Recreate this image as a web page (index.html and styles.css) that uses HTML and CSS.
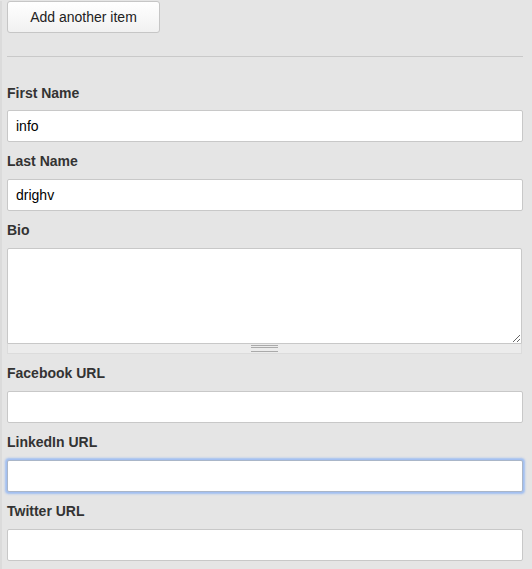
FILE: index.html
```html
<!DOCTYPE html>
<html>
<head>
<meta charset="utf-8">
<link rel="stylesheet" href="styles.css">
</head>
<body>
<div class="page">
  <button class="btn" type="button">Add another item</button>
  <div class="rule"></div>
  <form class="form">
    <div class="field first">
      <label class="label">First Name</label>
      <input class="input" type="text" value="info">
    </div>
    <div class="field">
      <label class="label">Last Name</label>
      <input class="input" type="text" value="drighv">
    </div>
    <div class="field">
      <label class="label">Bio</label>
      <div class="textarea-wrap">
        <textarea class="textarea"></textarea>
        <div class="grippie"><span></span></div>
      </div>
    </div>
    <div class="field after-bio">
      <label class="label">Facebook URL</label>
      <input class="input" type="text">
    </div>
    <div class="field">
      <label class="label">LinkedIn URL</label>
      <input class="input focus" type="text">
    </div>
    <div class="field">
      <label class="label">Twitter URL</label>
      <input class="input" type="text">
    </div>
  </form>
</div>
</body>
</html>
```

FILE: styles.css
```css
html, body {
  margin: 0;
  padding: 0;
  background: #e5e5e5;
  height: 100%;
  overflow: hidden;
}
body {
  font-family: "Liberation Sans", Arial, sans-serif;
  color: #333;
}
.page {
  border-left: 2px solid #dbdbdb;
  padding-left: 5px;
  width: 516px;
  min-height: 100%;
  box-sizing: content-box;
}
.btn {
  display: block;
  margin: 1px 0 0 0;
  width: 153px;
  height: 32px;
  border: 1px solid #c6c6c6;
  border-radius: 3px;
  background: linear-gradient(#ffffff, #f1f1f1);
  font-family: "Liberation Sans", Arial, sans-serif;
  font-size: 14px;
  color: #222;
  padding: 0;
}
.rule {
  height: 1px;
  background: #c9c9c9;
  margin-top: 23px;
  width: 516px;
}
.form {
  margin: 0;
}
.field {
  display: flex;
  flex-direction: column;
}
.label {
  display: block;
  font-size: 14px;
  font-weight: bold;
  line-height: 16px;
  color: #333;
  margin-top: 11px;
  margin-bottom: 10px;
}
.field.first .label {
  margin-top: 28px;
  margin-bottom: 9px;
}
.field.after-bio .label {
  margin-top: 11px;
}
.input {
  display: block;
  box-sizing: border-box;
  width: 516px;
  height: 32px;
  margin: 0;
  border: 1px solid #c8c8c8;
  border-radius: 2px;
  background: #fff;
  padding: 0 8px;
  font-family: "Liberation Sans", Arial, sans-serif;
  font-size: 14px;
  color: #000;
  outline: none;
}
.input.focus {
  border-color: #aab6c8;
  box-shadow: 0 0 2px 2px rgba(115, 165, 250, 0.6);
}
.textarea-wrap {
  width: 515px;
}
.textarea {
  display: block;
  box-sizing: border-box;
  width: 515px;
  height: 96px;
  margin: 0;
  border: 1px solid #c8c8c8;
  border-radius: 2px 2px 0 0;
  background: #fff;
  resize: vertical;
  outline: none;
  font-family: "Liberation Sans", Arial, sans-serif;
}
.grippie {
  box-sizing: border-box;
  height: 10px;
  background: #ececec;
  border: 1px solid #dcdcdc;
  border-top: none;
  display: flex;
  justify-content: center;
  align-items: flex-start;
}
.grippie span {
  display: block;
  width: 27px;
  height: 5px;
  margin-top: 1px;
  border-top: 1px solid #aaa;
  border-bottom: 1px solid #aaa;
  position: relative;
}
.grippie span::after {
  content: "";
  position: absolute;
  left: 0;
  right: 0;
  top: 1px;
  height: 1px;
  background: #aaa;
}
```
